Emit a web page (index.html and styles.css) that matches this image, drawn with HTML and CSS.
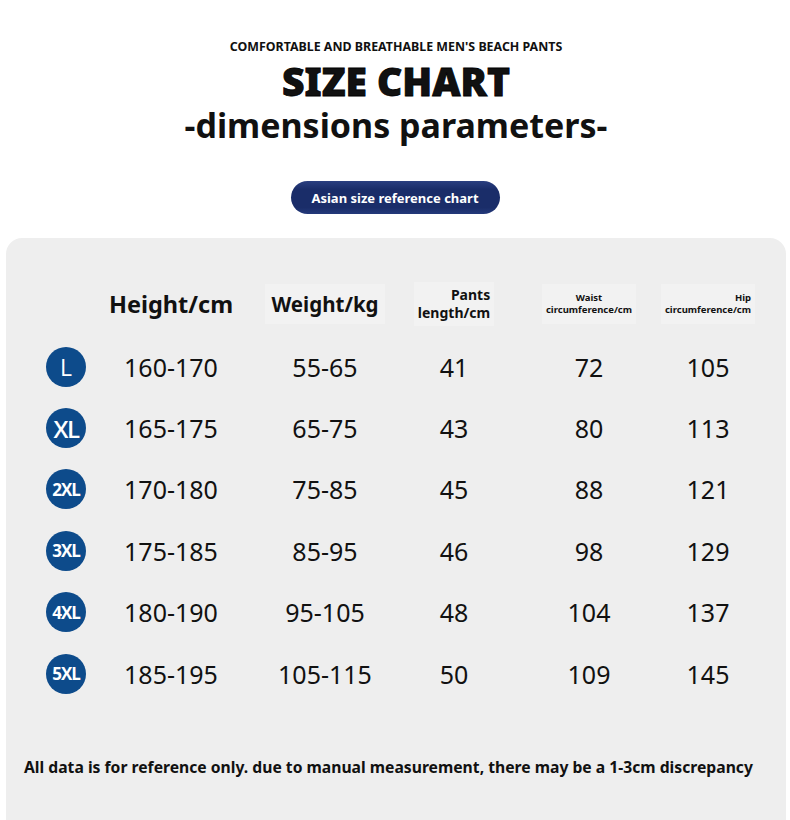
FILE: index.html
```html
<!DOCTYPE html>
<html>
<head>
<meta charset="utf-8">
<link rel="stylesheet" href="styles.css">
</head>
<body>
<header class="head">
  <div class="sub">COMFORTABLE AND BREATHABLE MEN'S BEACH PANTS</div>
  <h1 class="title">SIZE CHART</h1>
  <div class="subtitle">-dimensions parameters-</div>
  <div class="pill">Asian size reference chart</div>
</header>
<section class="panel">
  <div class="table">
    <div class="cell"></div>
    <div class="cell"><span class="h h-big">Height/cm</span></div>
    <div class="cell"><span class="h h-mid box">Weight/kg</span></div>
    <div class="cell"><span class="h h-pants box">Pants<br>length/cm</span></div>
    <div class="cell"><span class="h h-small box center">Waist<br>circumference/cm</span></div>
    <div class="cell"><span class="h h-small box">Hip<br>circumference/cm</span></div>

    <div class="cell"><span class="badge b1">L</span></div>
    <div class="cell num">160-170</div><div class="cell num">55-65</div><div class="cell num">41</div><div class="cell num">72</div><div class="cell num">105</div>

    <div class="cell"><span class="badge b2">XL</span></div>
    <div class="cell num">165-175</div><div class="cell num">65-75</div><div class="cell num">43</div><div class="cell num">80</div><div class="cell num">113</div>

    <div class="cell"><span class="badge b3">2XL</span></div>
    <div class="cell num">170-180</div><div class="cell num">75-85</div><div class="cell num">45</div><div class="cell num">88</div><div class="cell num">121</div>

    <div class="cell"><span class="badge b3">3XL</span></div>
    <div class="cell num">175-185</div><div class="cell num">85-95</div><div class="cell num">46</div><div class="cell num">98</div><div class="cell num">129</div>

    <div class="cell"><span class="badge b3">4XL</span></div>
    <div class="cell num">180-190</div><div class="cell num">95-105</div><div class="cell num">48</div><div class="cell num">104</div><div class="cell num">137</div>

    <div class="cell"><span class="badge b3">5XL</span></div>
    <div class="cell num">185-195</div><div class="cell num">105-115</div><div class="cell num">50</div><div class="cell num">109</div><div class="cell num">145</div>
  </div>
  <p class="note">All data is for reference only. due to manual measurement, there may be a 1-3cm discrepancy</p>
</section>
</body>
</html>
```
FILE: styles.css
```css
html, body {
  margin: 0;
  padding: 0;
  background: #ffffff;
}
body {
  font-family: "Noto Sans", "Open Sans", sans-serif;
  color: #111;
  overflow: hidden;
  height: 820px;
}
.head {
  display: flex;
  flex-direction: column;
  align-items: center;
  padding-top: 39px;
  padding-left: 2px;
}
.sub {
  font-size: 12.4px;
  font-weight: 700;
  line-height: 16px;
}
.title {
  margin: 4px 0 0;
  font-size: 39px;
  line-height: 44px;
  font-weight: 900;
  -webkit-text-stroke: 0.8px #000;
}
.subtitle {
  margin-top: 0;
  font-size: 34px;
  line-height: 44px;
  font-weight: 700;
}
.pill {
  margin-top: 34px;
  width: 209px;
  height: 33px;
  border-radius: 17px;
  background: linear-gradient(#2a3f80 0%, #1a2d69 25%, #1a2d69 80%, #24397a 100%);
  color: #fff;
  font-size: 13px;
  font-weight: 700;
  display: flex;
  align-items: center;
  justify-content: center;
  margin-left: -2px;
}
.panel {
  margin: 24px 0 0 6px;
  width: 780px;
  height: 600px;
  background: #eeeeee;
  border-radius: 16px;
  padding-top: 33px;
  box-sizing: border-box;
}
.table {
  display: grid;
  grid-template-columns: 80px 130px 178px 80px 190px 48px;
  grid-template-rows: 65px repeat(6, 61.4px);
  padding-left: 20px;
}
.cell {
  display: flex;
  justify-content: center;
  align-items: center;
  white-space: nowrap;
}
.num {
  font-size: 25px;
  font-weight: 400;
  color: #111;
}
.h {
  font-weight: 700;
  color: #111;
  text-align: right;
}
.h.center { text-align: center; }
.box {
  background: #f2f2f2;
}
.h-big {
  font-size: 23.5px;
  padding: 8px 0;
}
.h-mid {
  font-size: 20.5px;
  padding: 6px 6px;
}
.h-pants {
  font-size: 14px;
  line-height: 18px;
  padding: 4px 4px;
}
.h-small {
  font-size: 9.5px;
  line-height: 12px;
  padding: 8px 4px;
}
.badge {
  width: 40px;
  height: 40px;
  border-radius: 50%;
  background: #0d4b8b;
  color: #fff;
  display: flex;
  align-items: center;
  justify-content: center;
  font-family: "Open Sans", "Noto Sans", sans-serif;
}
.b1 { font-size: 23px; font-weight: 400; }
.b2 { font-size: 24px; font-weight: 600; letter-spacing: -1.5px; }
.b3 { font-size: 17px; font-weight: 700; letter-spacing: -1px; }
.note {
  margin: 52px 0 0 18px;
  font-size: 15.7px;
  font-weight: 700;
  line-height: 22px;
}
```
